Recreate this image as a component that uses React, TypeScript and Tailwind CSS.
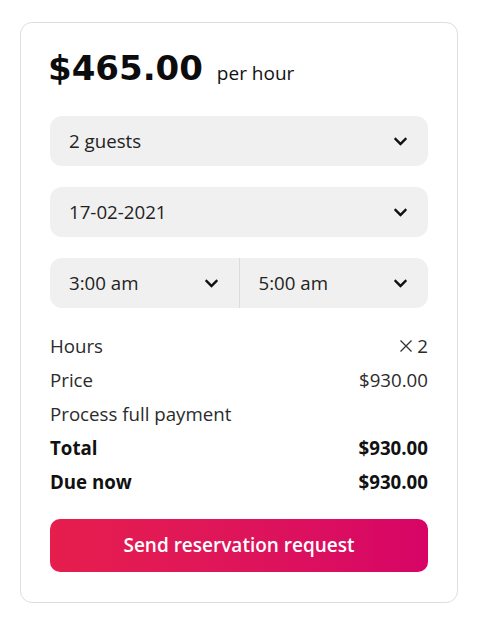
import { FaChevronDown } from "react-icons/fa";

function Select({ label, className = "" }: { label: string; className?: string }) {
  return (
    <div className={`flex h-[50px] items-center justify-between px-[19px] ${className}`}>
      <span>{label}</span>
      <FaChevronDown className="mr-px h-[15px] w-[15px] text-[#111]" />
    </div>
  );
}

function Row({ label, value, bold = false }: { label: string; value?: React.ReactNode; bold?: boolean }) {
  return (
    <div
      className={`flex h-[34px] items-center justify-between leading-[34px] ${
        bold ? "font-bold text-[#111]" : "text-[#2b2b2b]"
      }`}
    >
      <span>{label}</span>
      {value && <span>{value}</span>}
    </div>
  );
}

export default function App() {
  return (
    <div className="min-h-screen bg-white pl-[20px] pt-[22px] font-['Open_Sans',sans-serif] text-[18.7px] text-[#222]">
      <div className="w-[438px] rounded-[12px] border border-[#dedede] px-[29px] pb-[30px] pt-[25px]">
        {/* Price header */}
        <div className="flex items-baseline gap-[14px] leading-[40px]">
          <span className="-ml-[2px] font-['DejaVu_Sans',sans-serif] text-[34px] font-bold text-[#0c0c0c]">
            $465.00
          </span>
          <span className="text-[19px] text-[#111]">per hour</span>
        </div>

        <div className="mt-[23px] flex flex-col gap-[21px]">
          <Select label="2 guests" className="rounded-[12px] bg-[#f0f0f0]" />
          <Select label="17-02-2021" className="rounded-[12px] bg-[#f0f0f0]" />
          <div className="flex rounded-[12px] bg-[#f0f0f0]">
            <Select label="3:00 am" className="flex-1 border-r border-[#dcdcdc]" />
            <Select label="5:00 am" className="flex-1" />
          </div>
        </div>

        <div className="mt-[21px] flex flex-col">
          <Row
            label="Hours"
            value={
              <span className="flex items-center gap-[4px]">
                <svg width="14" height="14" viewBox="0 0 14 14" className="text-[#333]">
                  <path d="M1.5 1.5 L12.5 12.5 M12.5 1.5 L1.5 12.5" stroke="currentColor" strokeWidth="1.3" />
                </svg>
                2
              </span>
            }
          />
          <Row label="Price" value="$930.00" />
          <Row label="Process full payment" />
          <Row label="Total" value="$930.00" bold />
          <Row label="Due now" value="$930.00" bold />
        </div>

        <button className="mt-[20px] flex h-[53px] w-full items-center justify-center rounded-[10px] bg-gradient-to-r from-[#e61e4d] to-[#d70466] text-[19px] font-semibold text-white">
          Send reservation request
        </button>
      </div>
    </div>
  );
}
